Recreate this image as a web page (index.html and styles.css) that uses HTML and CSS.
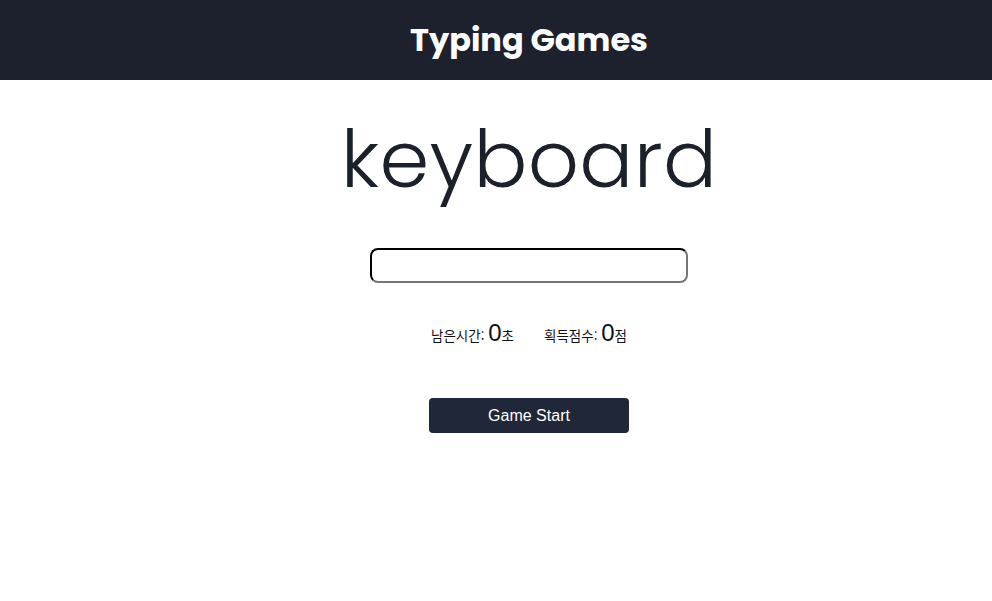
FILE: index.html
```html
<!DOCTYPE html>
<html lang="ko">
<head>
<meta charset="utf-8">
<title>Typing Games</title>
<link rel="stylesheet" href="styles.css">
</head>
<body>
<header class="header">
  <h1 class="title">Typing Games</h1>
</header>
<main class="main">
  <div class="word">keyboard</div>
  <input class="word-input" type="text">
  <div class="stats">
    <span class="stat">남은시간: <span class="num">0</span>초</span>
    <span class="stat">획득점수: <span class="num">0</span>점</span>
  </div>
  <button class="start-btn">Game Start</button>
</main>
</body>
</html>
```
FILE: styles.css
```css
* { box-sizing: border-box; }
html, body { margin: 0; padding: 0; }
body {
  font-family: "Noto Sans CJK KR", "Liberation Sans", sans-serif;
  background: #fff;
  color: #1b202b;
}
.header {
  height: 80px;
  background: #1c212d;
  display: flex;
  align-items: center;
  justify-content: center;
  padding-left: 66px;
}
.title {
  margin: 0;
  color: #fff;
  font-family: "Poppins", "Lato", sans-serif;
  font-weight: 700;
  font-size: 32px;
}
.main {
  display: flex;
  flex-direction: column;
  align-items: center;
  padding-left: 66px;
}
.word {
  font-family: "Poppins", "Lato", sans-serif;
  font-weight: 300;
  font-size: 80px;
  line-height: 1;
  margin-top: 39px;
  color: #1b202b;
  letter-spacing: 0.3px;
}
.word-input {
  margin-top: 49px;
  width: 318px;
  height: 35px;
  border: 2px inset #767676;
  border-top-color: #222;
  border-left-color: #222;
  border-radius: 8px;
  outline: none;
}
.stats {
  margin-top: 36px;
  display: flex;
  gap: 30px;
  font-size: 13.5px;
  color: #111;
  align-items: baseline;
}
.num {
  font-family: "Liberation Sans", sans-serif;
  font-size: 24px;
}
.start-btn {
  margin-top: 51px;
  width: 200px;
  height: 35px;
  background: #1f2738;
  color: #fff;
  border: none;
  border-radius: 4px;
  font-family: "Liberation Sans", sans-serif;
  font-size: 16px;
}
```
